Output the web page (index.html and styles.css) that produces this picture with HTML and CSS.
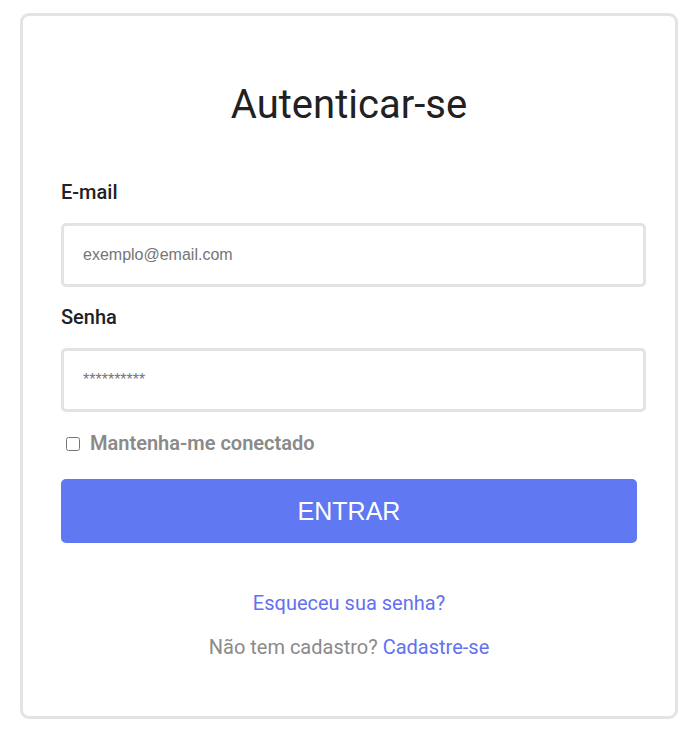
FILE: index.html
```html
<!DOCTYPE html>
<html lang="pt-BR">
<head>
<meta charset="utf-8">
<title>Autenticar-se</title>
<link rel="stylesheet" href="styles.css">
</head>
<body>
<main class="card">
  <h1 class="title">Autenticar-se</h1>
  <form class="form">
    <label class="label" for="email">E-mail</label>
    <input class="field" id="email" type="email" placeholder="exemplo@email.com">
    <label class="label" for="senha">Senha</label>
    <input class="field" id="senha" type="password" placeholder="**********">
    <label class="remember"><input class="check" type="checkbox"><span>Mantenha-me conectado</span></label>
    <button class="btn" type="button">ENTRAR</button>
  </form>
  <div class="links">
    <a class="link" href="#">Esqueceu sua senha?</a>
    <p class="signup">Não tem cadastro? <a class="link" href="#">Cadastre-se</a></p>
  </div>
</main>
</body>
</html>
```

FILE: styles.css
```css
* { box-sizing: border-box; }
html, body { margin: 0; background: #fff; }
body {
  padding: 13px 17px 0 20px;
  font-family: Roboto, "Liberation Sans", sans-serif;
}
.card {
  width: 658px;
  height: 706px;
  border: 3px solid #e3e3e3;
  border-radius: 9px;
  padding: 65px 38px 0 38px;
}
.title {
  margin: 0;
  text-align: center;
  font-size: 40px;
  font-weight: 400;
  line-height: 47px;
  color: #212121;
}
.form {
  display: flex;
  flex-direction: column;
  margin-top: 53px;
}
.label {
  font-size: 20px;
  font-weight: 500;
  line-height: 23px;
  color: #222;
}
.field {
  margin: 19px 0 19px 0;
  width: 585px;
  height: 64px;
  border: 3px solid #e3e3e3;
  border-radius: 5px;
  padding: 0 19px;
  font-family: "Liberation Sans", Arial, sans-serif;
  font-size: 16px;
  color: #333;
  outline: none;
}
.field::placeholder { color: #757575; }
.remember {
  display: flex;
  align-items: center;
  gap: 10px;
  margin-top: 1px;
  font-size: 20px;
  font-weight: 600;
  line-height: 23px;
  color: #8a8a8a;
}
.check {
  margin: 0 0 0 5px;
  width: 14px;
  height: 14px;
}
.btn {
  margin-top: 24px;
  width: 576px;
  height: 64px;
  border: 0;
  border-radius: 5px;
  background: #6078f2;
  color: #fff;
  font-family: "Liberation Sans", Arial, sans-serif;
  font-size: 25px;
}
.links {
  display: flex;
  flex-direction: column;
  align-items: center;
  margin-top: 49px;
  font-size: 20px;
  line-height: 23px;
}
.link { color: #6470f2; text-decoration: none; }
.signup { margin: 21px 0 0; color: #8a8a8a; }
```
